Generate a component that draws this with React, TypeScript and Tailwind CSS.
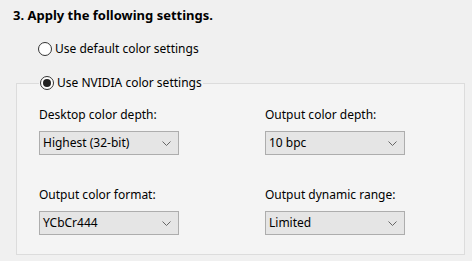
import { useState } from "react"

function Radio({ checked, label, onClick }: { checked: boolean; label: string; onClick: () => void }) {
    return (
        <div className="flex items-center gap-[3px] cursor-default" onClick={onClick}>
            <div className="w-[14px] h-[14px] rounded-full border border-[#333333] bg-white flex items-center justify-center">
                {checked && <div className="w-[8px] h-[8px] rounded-full bg-[#222222]" />}
            </div>
            <span className="leading-[16px]">{label}</span>
        </div>
    )
}

function Dropdown({ value }: { value: string }) {
    return (
        <div className="w-[140px] h-[24px] bg-[#e5e5e5] border border-[#adadad] flex items-center justify-between pl-[3px] pr-[7px]">
            <span className="leading-[16px]">{value}</span>
            <svg width="9" height="5" viewBox="0 0 9 5" fill="none">
                <path d="M0.5 0.5 L4.5 4.5 L8.5 0.5" stroke="#666666" strokeWidth="1" />
            </svg>
        </div>
    )
}

export default function App() {
    const [nvidia, setNvidia] = useState(true)
    return (
        <div className="w-[472px] h-[261px] bg-[#f0f0f0] text-[12px] text-black overflow-hidden font-['Noto_Sans',sans-serif]">
            <div className="pl-[13px] pt-[6px] font-bold text-[13px] leading-[18px]">3. Apply the following settings.</div>
            <div className="pl-[38px] mt-[17px]">
                <Radio checked={!nvidia} label="Use default color settings" onClick={() => setNvidia(false)} />
            </div>
            <fieldset className="ml-[16px] mt-[18px] w-[449px] h-[180px] border border-[#dcdcdc] bg-[#f4f4f4] pl-[22px] pt-[16px]">
                <legend className="px-[1px]">
                    <Radio checked={nvidia} label="Use NVIDIA color settings" onClick={() => setNvidia(true)} />
                </legend>
                <div className="grid grid-cols-[226px_140px] gap-y-[32px]">
                    <div className="flex flex-col gap-[8px]">
                        <span className="leading-[16px]">Desktop color depth:</span>
                        <Dropdown value="Highest (32-bit)" />
                    </div>
                    <div className="flex flex-col gap-[8px]">
                        <span className="leading-[16px]">Output color depth:</span>
                        <Dropdown value="10 bpc" />
                    </div>
                    <div className="flex flex-col gap-[8px]">
                        <span className="leading-[16px]">Output color format:</span>
                        <Dropdown value="YCbCr444" />
                    </div>
                    <div className="flex flex-col gap-[8px]">
                        <span className="leading-[16px]">Output dynamic range:</span>
                        <Dropdown value="Limited" />
                    </div>
                </div>
            </fieldset>
        </div>
    )
}
